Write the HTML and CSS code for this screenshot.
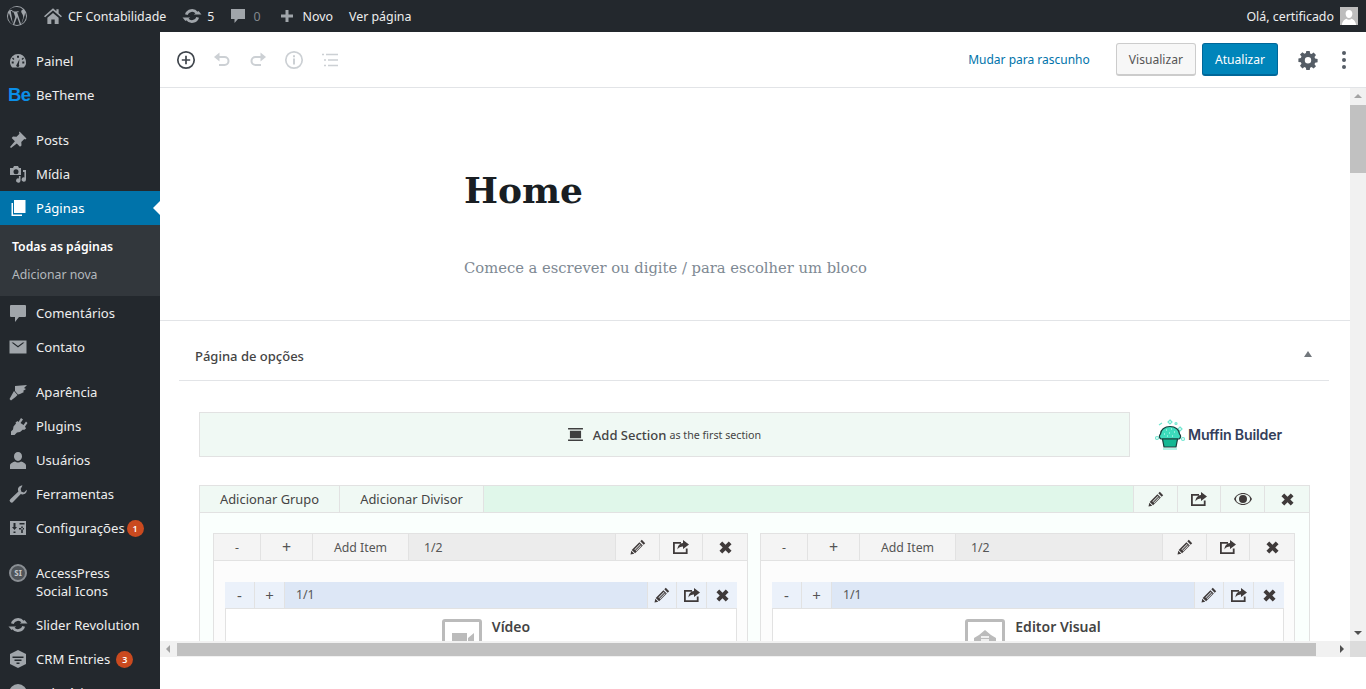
FILE: index.html
```html
<!doctype html>
<html lang="pt-BR">
<head>
	<title>Editar Página</title>
	<meta charset="utf-8">
	<link rel="stylesheet" href="styles.css">
</head>
<body>
	<svg class="sprites" width="0" height="0">
		<symbol id="i-edit" viewBox="0 0 16 16"><path fill-rule="evenodd" d="M11.8.8l3.400 3.400-1.500 1.500-3.400-3.400zM9.400 3.200l3.400 3.400-7.700 7.700-3.400-3.400zM9.800 5l.6.6-5.400 5.400-.6-.6zM11 6.300l.5.5-5.400 5.400-.5-.5zM1.300 11.700l3 3-3.800.9z"/></symbol>
		<symbol id="i-share" viewBox="0 0 18 16"><path d="M1 3h8v1.800H2.800v8.400h11V9.500h1.800V15H1z"/><path d="M11 1l6 4.500-6 4.500V7.400c-2.600 0-4.200.8-5.500 3 .2-3.600 2.300-6 5.500-6.300z"/></symbol>
		<symbol id="i-close" viewBox="0 0 14 14"><path d="M3.500.5L7 4 10.500.5l3 3L10 7l3.500 3.500-3 3L7 10l-3.500 3.500-3-3L4 7 .5 3.500z"/></symbol>
		<symbol id="i-update" viewBox="0 0 20 20"><path d="M4.300 8.600A6 6 0 0 1 14.800 6.800" fill="none" stroke-width="2.800"/><path d="M11.800 8.500h7.700L16.500 5z"/><path d="M15.700 11.400A6 6 0 0 1 5.200 13.200" fill="none" stroke-width="2.800"/><path d="M8.200 11.500H.5L3.500 15z"/></symbol>
	</svg>

	<header class="adminbar">
		<svg class="bar-icon wp" viewBox="0 0 20 20"><path d="M10 0a10 10 0 1 0 0 20 10 10 0 0 0 0-20zm0 1a9 9 0 0 1 6.100 2.400c-1.100 0-1.900 1-1.900 2 0 .9.500 1.700 1.100 2.600.4.800.9 1.700.9 3.100 0 1-.4 2.100-.9 3.700l-1.100 3.800-4.100-12.300c.7 0 1.300-.1 1.300-.1.600-.1.500-1 0-1 0 0-1.800.2-3 .2-1.100 0-2.900-.2-2.900-.2-.6 0-.7.900-.1 1 0 0 .6.100 1.200.1l1.700 4.800-2.400 7.300L3.800 5.200c.7 0 1.300-.1 1.300-.1.600-.1.500-1 0-1 0 0-1.800.2-2.900.2A9 9 0 0 1 10 1zM1.900 7l4.300 11.900A9 9 0 0 1 1.900 7zm8.200 4.100l2.700 7.400a9 9 0 0 1-5.500.100zm7.800-4.900a9 9 0 0 1-3.300 11.900l2.700-7.900c.5-1.300.7-2.300.7-3.200 0-.3 0-.6-.1-.8z"/></svg>
		<span class="bar-item"><svg class="bar-icon home" viewBox="0 0 16 16"><path d="M8 1l3 2.700V2h2v3.500L16 8.200l-1 1-7-6-7 6-1-1zM3 9.500l5-4.200 5 4.200V15H9.500v-4h-3v4H3z"/></svg>CF Contabilidade</span>
		<span class="bar-item"><svg class="bar-icon upd"><use href="#i-update"/></svg>5</span>
		<span class="bar-item muted"><svg class="bar-icon" viewBox="0 0 16 16"><path d="M1 1h14v10H8l-3.500 4v-4H1z"/></svg>0</span>
		<span class="bar-item"><svg class="bar-icon" viewBox="0 0 16 16"><path d="M6.500 2h3v4.500H14v3H9.500V14h-3V9.500H2v-3h4.500z"/></svg>Novo</span>
		<span class="bar-item">Ver página</span>
		<span class="bar-right">Olá, certificado<span class="avatar"><svg viewBox="0 0 18 18"><path d="M9 3c2 0 3.400 1.600 3.400 3.700S11 11 9 11 5.600 8.800 5.600 6.700 7 3 9 3zM2 18c0-3.400 2.600-5.600 4.500-6.200.7.700 1.500 1 2.500 1s1.800-.3 2.500-1C13.400 12.400 16 14.600 16 18z"/></svg></span></span>
	</header>

	<div class="shell">
		<nav class="sidebar">
			<a class="menu-item"><svg class="menu-icon" viewBox="0 0 20 20"><path d="M10 3a8 8 0 0 0-8 8c0 2.200.9 4.200 2.300 5.600h11.400A8 8 0 0 0 10 3zM9 4.700h2v2H9zM5 6.500l1.400 1.400L5.500 9 4 7.500zm10 0L16 7.500 14.500 9l-1-1.100zM3.700 10.500h2v2h-2zm10.600 0h2v2h-2zM11.500 8l-.6 5.500a1.500 1.500 0 1 1-2-.3z"/></svg>Painel</a>
			<a class="menu-item"><span class="be-logo">Be</span>BeTheme</a>
			<div class="menu-gap"></div>
			<a class="menu-item"><svg class="menu-icon" viewBox="0 0 20 20"><path d="M11.500 1.500l7 7-1.200 1-1-.5-3 3 .2 3.500-1.500 1.300-3.200-3.200L3 18l-1-1 4.900-5.700L3.700 8 5 6.600l3.500.2 3-3-.5-1z"/></svg>Posts</a>
			<a class="menu-item"><svg class="menu-icon" viewBox="0 0 20 20"><path d="M6 2h4l1 2h2v7H2V4h3zm2 3.300a2.500 2.500 0 1 0 0 5 2.500 2.500 0 0 0 0-5zM15 6h3v9.500a2.200 2.200 0 1 1-1.600-2.100V8H15zM12.500 12v4.500a2.200 2.200 0 1 1-1.600-2.100V12z"/></svg>Mídia</a>
			<a class="menu-item current"><svg class="menu-icon" viewBox="0 0 20 20"><path d="M6 2h11.500v13H6z"/><path d="M3.500 5v13H14v-1.500H5V5z"/></svg>Páginas</a>
			<div class="submenu">
				<a class="sub-item active">Todas as páginas</a>
				<a class="sub-item">Adicionar nova</a>
			</div>
			<a class="menu-item"><svg class="menu-icon" viewBox="0 0 20 20"><path d="M3 2h14a1 1 0 0 1 1 1v10a1 1 0 0 1-1 1H11l-4 5v-5H3a1 1 0 0 1-1-1V3a1 1 0 0 1 1-1z"/></svg>Comentários</a>
			<a class="menu-item"><svg class="menu-icon" viewBox="0 0 20 20"><path d="M1.500 3.500h17v13h-17zM3.500 5.500L10 10.500l6.500-5h-1.800L10 9 5.300 5.500z"/></svg>Contato</a>
			<div class="menu-gap"></div>
			<a class="menu-item"><svg class="menu-icon" viewBox="0 0 20 20"><path d="M7 4l12-1-3 3 2 1-3 2 1 1-4 2-2 .5-3-3.500zM6 9l3.500 4-2 2-4.500 3.500L1.500 17 4 12.500z"/></svg>Aparência</a>
			<a class="menu-item"><svg class="menu-icon" viewBox="0 0 20 20"><path d="M13 2l2 1.500-2.500 3.500 3 2 2.500-3.500 1.500 1.500-2.500 3.500 1 2-2 1.500-1-.5-3 2.500-3 .5-2.500 2.500H3v-3.500l2-2 .5-3 2.500-3-.5-1 2-1.500 1 1z"/></svg>Plugins</a>
			<a class="menu-item"><svg class="menu-icon" viewBox="0 0 20 20"><path d="M10 2c2.400 0 4 1.900 4 4.300S12.400 11 10 11 6 8.700 6 6.300 7.600 2 10 2zM2 19v-3.500C2 13.500 5 12 7 11.500c.8.600 1.900 1 3 1s2.200-.4 3-1c2 .5 5 2 5 4V19z"/></svg>Usuários</a>
			<a class="menu-item"><svg class="menu-icon" viewBox="0 0 20 20"><path d="M14.500 1.500c-2.500-.3-4.800 2-4.500 4.500 0 .6.200 1.100.4 1.600L2.500 15a2 2 0 1 0 2.800 2.800l7.500-7.700c.5.200 1 .3 1.500.4 2.600.2 4.800-2 4.500-4.700l-2.800 2.700-2.600-.8-.8-2.600z"/></svg>Ferramentas</a>
			<a class="menu-item"><svg class="menu-icon" viewBox="0 0 20 20"><path fill-rule="evenodd" d="M2 3h16v14H2zm3.500 2v4H4l2.500 3L9 9H7.500V5zm6 0v1.500h5V5zm1.700 3.500V15h1.600V8.500zM11 10v1.500h5V10zm-5.500 3.500V15h2v-1.500z"/></svg>Configurações<span class="badge">1</span></a>
			<div class="menu-gap"></div>
			<a class="menu-item tall"><span class="si-icon">SI</span><span>AccessPress<br>Social Icons</span></a>
			<a class="menu-item"><svg class="menu-icon"><use href="#i-update"/></svg>Slider Revolution</a>
			<a class="menu-item"><svg class="menu-icon hex" viewBox="0 0 20 20"><path fill-rule="evenodd" d="M10 1l8 4v10l-8 4-8-4V5zM4.500 7.500V9h11V7.500zm2 3V12h7v-1.500zm2 3V15h3v-1.500z"/></svg>CRM Entries<span class="badge far">3</span></a>
			<a class="menu-item"><svg class="menu-icon" viewBox="0 0 20 20"><circle cx="10" cy="10" r="9"/></svg>Relatórios</a>
		</nav>

		<main class="editor">
			<div class="toolbar">
				<svg class="tool dark" viewBox="0 0 20 20"><circle cx="10" cy="10" r="8.200" fill="none" stroke-width="1.700"/><path d="M10 5.800v8.400M5.800 10h8.400" fill="none" stroke-width="1.700"/></svg>
				<svg class="tool" viewBox="0 0 20 20"><path d="M3.500 7h9a4 4 0 0 1 0 8H7" fill="none" stroke-width="2"/><path class="solid" d="M7.500 2.500v9L2 7z"/></svg>
				<svg class="tool" viewBox="0 0 20 20"><path d="M16.500 7h-9a4 4 0 0 0 0 8H13" fill="none" stroke-width="2"/><path class="solid" d="M12.500 2.500v9L18 7z"/></svg>
				<svg class="tool" viewBox="0 0 20 20"><circle cx="10" cy="10" r="8.200" fill="none" stroke-width="1.700"/><path d="M10 8.500v6M10 5.200v2" fill="none" stroke-width="2"/></svg>
				<svg class="tool" viewBox="0 0 20 20"><path d="M6 4.500h12M8 10h10M8 15.500h10M2 4.500h2M4 10h2M4 15.500h2" fill="none" stroke-width="1.500"/></svg>
				<a class="draft-link">Mudar para rascunho</a>
				<button class="btn">Visualizar</button>
				<button class="btn primary">Atualizar</button>
				<svg class="gear" viewBox="0 0 20 20"><path fill-rule="evenodd" d="M8.300 1h3.400l.4 2.500 1.500.6 2-1.500 2.400 2.400-1.500 2 .6 1.500 2.500.4v3.400l-2.500.4-.6 1.500 1.500 2-2.400 2.400-2-1.500-1.500.6-.4 2.500H8.300l-.4-2.500-1.500-.6-2 1.500L2 15.800l1.500-2-.6-1.500-2.500-.4V8.500l2.500-.4.600-1.500L2 4.600 4.400 2.200l2 1.500 1.500-.6zM10 7a3.200 3.200 0 1 0 0 6.400A3.200 3.200 0 0 0 10 7z"/></svg>
				<span class="kebab"><i></i><i></i><i></i></span>
			</div>

			<div class="viewport">
				<div class="scroll-area">
					<div class="content">
						<section class="title-block">
							<h1>Home</h1>
							<p>Comece a escrever ou digite / para escolher um bloco</p>
						</section>

						<section class="metabox">
							<div class="metabox-head">
								<h2>Página de opções</h2>
								<span class="caret-up"></span>
							</div>
							<div class="builder">
								<div class="add-row">
									<div class="add-section">
										<svg class="add-icon" viewBox="0 0 16 14"><path d="M0 0h16v1.500H0zM2 3h12v8H2zM0 12.500h16V14H0z"/></svg>
										<b>Add Section</b><small>as the first section</small>
									</div>
									<div class="muffin">
										<svg viewBox="0 0 32 32"><g fill="none" stroke="#6fe6d0" stroke-width="1.200"><path d="M16 1l2 2-2 2-2-2z"/><path d="M5 6l3-2M26 8l2 2-2 2-2-2z"/><circle cx="22" cy="4.500" r="1"/><circle cx="3" cy="19" r="1.500"/><circle cx="29" cy="20" r="1.500"/></g><path d="M7 20a3 3 0 0 1-.5-5c0-4 4-7.500 9.500-7.500s9.500 3.500 9.500 7.500a3 3 0 0 1-.5 5z" fill="#3ddbbc" stroke="#173f3c" stroke-width="1.200"/><path d="M8.500 20h15L22 28H10z" fill="#14b893" stroke="#173f3c" stroke-width="1.200"/><path d="M12 11h1M17 10h1M20 13h1M10 15h1M15 14h1M18 17h1M13 17h1" stroke="#d6fff5" stroke-width="1.200"/><path d="M9 30h14" stroke="#9ceedd" stroke-width="1.500"/></svg>
										<span>Muffin Builder</span>
									</div>
								</div>

								<div class="mfn-section">
									<div class="section-head">
										<a class="sec-btn grupo">Adicionar Grupo</a>
										<a class="sec-btn divisor">Adicionar Divisor</a>
										<span class="sec-fill"></span>
										<a class="ico w44"><svg><use href="#i-edit"/></svg></a>
										<a class="ico w43"><svg class="wide"><use href="#i-share"/></svg></a>
										<a class="ico w44"><svg class="eye" viewBox="0 0 18 12"><path fill-rule="evenodd" d="M9 0c4 0 7.300 2.500 9 6-1.700 3.500-5 6-9 6s-7.300-2.500-9-6c1.700-3.500 5-6 9-6zm0 1C6.500 1 4.200 2 2.500 3.800a4.500 4.500 0 0 0 0 4.400C4.200 10 6.500 11 9 11s4.800-1 6.500-2.800a4.500 4.500 0 0 0 0-4.400C13.800 2 11.500 1 9 1zm0 1a4 4 0 1 1 0 8 4 4 0 0 1 0-8z"/></svg></a>
										<a class="ico w45"><svg class="small"><use href="#i-close"/></svg></a>
									</div>
									<div class="section-body">
										<div class="wrap">
											<div class="wrap-head">
												<a class="w-btn minus">-</a>
												<a class="w-btn plus">+</a>
												<a class="w-btn add">Add Item</a>
												<span class="w-size">1/2</span>
												<a class="ico w44"><svg><use href="#i-edit"/></svg></a>
												<a class="ico w43"><svg class="wide"><use href="#i-share"/></svg></a>
												<a class="ico w45"><svg class="small"><use href="#i-close"/></svg></a>
											</div>
											<div class="wrap-body">
												<div class="item">
													<div class="item-head">
														<a class="i-btn">-</a>
														<a class="i-btn">+</a>
														<span class="i-size">1/1</span>
														<a class="i-ico"><svg><use href="#i-edit"/></svg></a>
														<a class="i-ico"><svg class="wide"><use href="#i-share"/></svg></a>
														<a class="i-ico"><svg class="small"><use href="#i-close"/></svg></a>
													</div>
													<div class="item-body">
														<span class="item-thumb"><svg viewBox="0 0 26 20"><path d="M3 4h15v13H3zM19 9l6-5v13l-6-5z"/></svg></span>
														<b>Vídeo</b>
													</div>
												</div>
											</div>
										</div>
										<div class="wrap">
											<div class="wrap-head">
												<a class="w-btn minus">-</a>
												<a class="w-btn plus">+</a>
												<a class="w-btn add">Add Item</a>
												<span class="w-size">1/2</span>
												<a class="ico w44"><svg><use href="#i-edit"/></svg></a>
												<a class="ico w43"><svg class="wide"><use href="#i-share"/></svg></a>
												<a class="ico w45"><svg class="small"><use href="#i-close"/></svg></a>
											</div>
											<div class="wrap-body">
												<div class="item">
													<div class="item-head">
														<a class="i-btn">-</a>
														<a class="i-btn">+</a>
														<span class="i-size">1/1</span>
														<a class="i-ico"><svg><use href="#i-edit"/></svg></a>
														<a class="i-ico"><svg class="wide"><use href="#i-share"/></svg></a>
														<a class="i-ico"><svg class="small"><use href="#i-close"/></svg></a>
													</div>
													<div class="item-body">
														<span class="item-thumb"><svg viewBox="0 0 26 20"><path d="M13 1l6 5 5 3v3H2V9l5-3z"/><path d="M9 8h8M9 11h8" stroke="#fff" stroke-width="1.300"/></svg></span>
														<b class="dark-title">Editor Visual</b>
													</div>
												</div>
											</div>
										</div>
									</div>
								</div>
							</div>
						</section>
					</div>
				</div>
				<div class="vbar">
					<span class="arrow up"></span>
					<span class="vthumb"></span>
					<span class="vspace"></span>
					<span class="arrow down"></span>
				</div>
			</div>

			<div class="hbar">
				<span class="arrow left"></span>
				<span class="hthumb"></span>
				<span class="arrow right"></span>
				<span class="corner"></span>
			</div>
			<div class="footer-space"></div>
		</main>
	</div>
</body>
</html>
```

FILE: styles.css
```css
* {
	box-sizing: border-box;
}
html, body {
	height: 100%;
}
body {
	margin: 0;
	overflow: hidden;
	background: #fff;
	font-family: "Noto Sans", "Open Sans", sans-serif;
	font-size: 12.3px;
	color: #444;
}
.sprites {
	position: absolute;
}

/* admin bar */
.adminbar {
	display: flex;
	align-items: center;
	height: 32px;
	padding: 0 8px 0 7px;
	background: #23282d;
	color: #eee;
	font-size: 12.4px;
}
.bar-icon {
	width: 16px;
	height: 16px;
	margin-right: 7px;
	fill: #a0a5aa;
	stroke: #a0a5aa;
	stroke-width: 0;
}
.bar-icon.wp {
	width: 20px;
	height: 20px;
	margin-right: 17px;
}
.bar-icon.home {
	width: 18px;
	height: 18px;
	margin-right: 6px;
}
.bar-icon.upd {
	width: 20px;
	height: 20px;
	margin-right: 5px;
}
.bar-item {
	display: flex;
	align-items: center;
	margin-right: 16px;
}
.bar-item.muted {
	margin-right: 19px;
	color: #82878c;
}
.bar-right {
	display: flex;
	align-items: center;
	margin-left: auto;
}
.avatar {
	width: 18px;
	height: 18px;
	margin-left: 6px;
	background: #bdbdbd;
}
.avatar svg {
	display: block;
	fill: #fff;
}

/* layout */
.shell {
	display: flex;
	height: 657px;
}
.sidebar {
	flex: 0 0 160px;
	padding-top: 12px;
	overflow: hidden;
	background: #23282d;
}
.menu-item {
	display: flex;
	align-items: center;
	height: 34px;
	padding-left: 8px;
	color: #eee;
	font-size: 13.1px;
	white-space: nowrap;
}
.menu-item.tall {
	height: 52px;
	line-height: 18px;
	align-items: flex-start;
	padding-top: 8px;
}
.menu-item.current {
	position: relative;
	background: #0073aa;
	color: #fff;
}
.menu-item.current .menu-icon {
	fill: #fff;
}
.menu-item.current::after {
	content: "";
	position: absolute;
	right: 0;
	top: 10px;
	border: 7px solid transparent;
	border-right-color: #fff;
	border-left-width: 0;
}
.menu-gap {
	height: 11px;
}
.menu-icon {
	flex: none;
	width: 20px;
	height: 20px;
	margin-right: 8px;
	fill: #a0a5aa;
	stroke: #a0a5aa;
	stroke-width: 0;
}
.si-icon {
	flex: none;
	width: 18px;
	height: 18px;
	margin: 0 9px 0 1px;
	border: 2px solid #8a8f94;
	border-radius: 50%;
	background: #50555a;
	color: #c4c7ca;
	font-size: 8px;
	font-weight: 700;
	line-height: 14px;
	text-align: center;
}
.be-logo {
	width: 28px;
	margin-right: 0;
	color: #0b8fe8;
	font-family: "Liberation Sans", sans-serif;
	font-size: 18.5px;
	font-weight: bold;
	letter-spacing: -.6px;
}
.submenu {
	height: 71px;
	padding-top: 8px;
	background: #32373c;
}
.sub-item {
	display: block;
	height: 28px;
	padding-left: 12px;
	color: #b4b9be;
	font-size: 12.25px;
	line-height: 28px;
}
.sub-item.active {
	color: #fff;
	font-weight: 600;
}
.badge {
	width: 17px;
	height: 17px;
	margin-left: 2px;
	border-radius: 50%;
	background: #ca4a1f;
	color: #fff;
	font-size: 9px;
	font-weight: 600;
	line-height: 17px;
	text-align: center;
}
.badge.far {
	margin-left: 6px;
}

/* editor */
.editor {
	flex: 1;
	display: flex;
	flex-direction: column;
	min-width: 0;
}
.toolbar {
	flex: none;
	display: flex;
	align-items: center;
	height: 56px;
	padding: 0 20px 0 16px;
	border-bottom: 1px solid #e2e4e7;
	background: #fff;
}
.tool {
	width: 20px;
	height: 20px;
	margin-right: 16px;
	stroke: #ccd0d4;
}
.tool .solid {
	fill: #ccd0d4;
	stroke: none;
}
.tool.dark {
	stroke: #40464d;
}
.draft-link {
	margin-left: auto;
	margin-right: 26px;
	color: #0073aa;
	font-size: 12px;
}
.btn {
	height: 33px;
	padding: 0 12px;
	margin-right: 6px;
	border: 1px solid #ccc;
	border-bottom-width: 2px;
	border-radius: 3px;
	background: #f7f7f7;
	color: #555;
	font-family: inherit;
	font-size: 12.1px;
}
.btn.primary {
	margin-right: 20px;
	border-color: #006799;
	background: #0085ba;
	color: #fff;
}
.gear {
	width: 20px;
	height: 20px;
	fill: #555d66;
}
.kebab {
	display: flex;
	flex-direction: column;
	gap: 3px;
	margin-left: 24px;
}
.kebab i {
	width: 4px;
	height: 4px;
	border-radius: 50%;
	background: #555d66;
}
.viewport {
	flex: 1;
	display: flex;
	min-height: 0;
}
.scroll-area {
	flex: 1;
	min-width: 0;
	overflow: hidden;
}
.title-block {
	height: 233px;
	padding: 78px 0 0 304px;
	border-bottom: 1px solid #e2e4e7;
}
.title-block h1 {
	margin: 0;
	font-family: "DejaVu Serif", "Liberation Serif", serif;
	font-size: 36px;
	font-weight: bold;
	line-height: 48px;
	color: #191e23;
}
.title-block p {
	margin: 41px 0 0;
	font-family: "DejaVu Serif", "Liberation Serif", serif;
	font-size: 14.75px;
	line-height: 26px;
	color: #7e8993;
}
.metabox-head {
	display: flex;
	align-items: center;
	height: 60px;
	margin: 0 21px 0 19px;
	padding: 10px 16px 0;
	border-bottom: 1px solid #e2e4e7;
}
.metabox-head h2 {
	margin: 0;
	font-size: 13px;
	font-weight: 500;
	color: #444;
}
.caret-up {
	margin-left: auto;
	margin-top: -4px;
	margin-right: 1px;
	border: 4px solid transparent;
	border-top-width: 0;
	border-bottom: 6px solid #72777c;
}
.builder {
	padding: 31px 40px 0 39px;
}
.add-row {
	display: flex;
	align-items: center;
	margin-bottom: 28px;
}
.add-section {
	display: flex;
	align-items: center;
	justify-content: center;
	width: 931px;
	height: 45px;
	border: 1px solid #e2e2e2;
	background: #f0f9f4;
	color: #444;
}
.add-icon {
	width: 15px;
	height: 13px;
	margin-right: 10px;
	fill: #3f3f3f;
}
.add-section b {
	font-size: 13px;
	font-weight: 500;
}
.add-section small {
	margin-left: 3px;
	font-size: 10.7px;
}
.muffin {
	display: flex;
	align-items: center;
	margin-left: 24px;
	color: #34405a;
	font-family: "Inter", "Lato", sans-serif;
	font-size: 14.2px;
	font-weight: 600;
	letter-spacing: -.2px;
}
.muffin svg {
	width: 32px;
	height: 32px;
	margin-right: 2px;
}
.mfn-section {
	height: 400px;
	border: 1px solid #e2e2e2;
	background: #fafffd;
}
.section-head {
	display: flex;
	height: 27px;
	border-bottom: 1px solid #e2e2e2;
	background: #f0f9f4;
}
.sec-btn {
	border-right: 1px solid #e2e2e2;
	color: #444;
	font-size: 12.9px;
	line-height: 27px;
	text-align: center;
}
.sec-btn.grupo {
	width: 140px;
}
.sec-btn.divisor {
	width: 144px;
}
.sec-fill {
	flex: 1;
	background: #e0f7ea;
}
.ico {
	display: flex;
	align-items: center;
	justify-content: center;
	border-left: 1px solid #e2e2e2;
}
.ico svg, .i-ico svg {
	width: 16px;
	height: 16px;
	fill: #3f3a3a;
}
.ico svg.wide, .i-ico svg.wide {
	width: 18px;
	height: 16px;
}
.ico svg.small, .i-ico svg.small {
	width: 13px;
	height: 13px;
}
.ico svg.eye {
	width: 18px;
	height: 12px;
}
.w43 {
	width: 43px;
}
.w44 {
	width: 44px;
}
.w45 {
	width: 45px;
}
.section-body {
	display: flex;
	gap: 12px;
	padding: 20px 14px 0 13px;
}
.wrap {
	flex: 0 0 535px;
	height: 200px;
	border: 1px solid #e2e2e2;
	background: #fcfcfc;
}
.wrap-head {
	display: flex;
	height: 27px;
	border-bottom: 1px solid #e2e2e2;
	background: #f4f4f4;
	color: #555;
}
.w-btn {
	border-right: 1px solid #e2e2e2;
	line-height: 27px;
	text-align: center;
}
.w-btn.minus {
	width: 47px;
}
.w-btn.plus {
	width: 52px;
	font-size: 16px;
}
.w-btn.add {
	width: 96px;
}
.w-size {
	flex: 1;
	padding-left: 15px;
	background: #ececec;
	line-height: 27px;
}
.wrap-body {
	padding: 21px 10px 0 11px;
}
.item {
	border: 1px solid #e2e2e2;
	background: #fff;
}
.item-head {
	display: flex;
	height: 27px;
	margin: -1px -1px 0;
	border-bottom: 1px solid #e2e2e2;
	background: #ebf1fa;
	color: #555;
}
.i-btn {
	width: 30px;
	border-right: 1px solid #e2e2e2;
	font-size: 15px;
	line-height: 26px;
	text-align: center;
}
.i-size {
	flex: 1;
	padding-left: 11px;
	background: #dde7f6;
	line-height: 26px;
}
.i-ico {
	display: flex;
	align-items: center;
	justify-content: center;
	width: 30px;
	border-left: 1px solid #e2e2e2;
}
.i-size + .i-ico {
	width: 29px;
}
.i-ico:last-child {
	width: 31px;
}
.item-body {
	display: flex;
	justify-content: center;
	gap: 10px;
	height: 80px;
	padding: 10px 0 0 10px;
}
.item-body b {
	font-size: 14px;
	font-weight: 600;
	line-height: 16px;
	color: #444;
}
.item-thumb {
	display: flex;
	align-items: center;
	justify-content: center;
	width: 40px;
	height: 40px;
	border: 3px solid #bbb;
	border-radius: 3px;
}
.item-thumb svg {
	width: 26px;
	height: 20px;
	fill: #bbb;
}
.dark-title {
	color: #4f5966;
}

/* scrollbars */
.vbar {
	flex: 0 0 16px;
	display: flex;
	flex-direction: column;
	background: #f1f1f1;
}
.vthumb {
	height: 68px;
	margin-top: 1px;
	background: #c1c1c1;
}
.vspace {
	flex: 1;
}
.arrow {
	flex: none;
	display: flex;
	width: 16px;
	height: 16px;
}
.arrow::before {
	content: "";
	margin: auto;
	border: 4px solid transparent;
}
.arrow.up::before {
	border-top-width: 0;
	border-bottom-color: #a3a3a3;
}
.arrow.down::before {
	border-bottom-width: 0;
	border-top-color: #505050;
}
.arrow.left::before {
	border-left-width: 0;
	border-right-color: #a3a3a3;
}
.arrow.right::before {
	border-right-width: 0;
	border-left-color: #505050;
}
.hbar {
	flex: none;
	display: flex;
	align-items: center;
	height: 16px;
	background: #f1f1f1;
}
.hthumb {
	width: 1139px;
	height: 13px;
	margin-left: 1px;
	background: #c1c1c1;
}
.hthumb + .arrow {
	margin-left: auto;
}
.corner {
	width: 16px;
	height: 16px;
	background: #dcdcdc;
}
.footer-space {
	flex: none;
	height: 32px;
	background: #fff;
}
```
